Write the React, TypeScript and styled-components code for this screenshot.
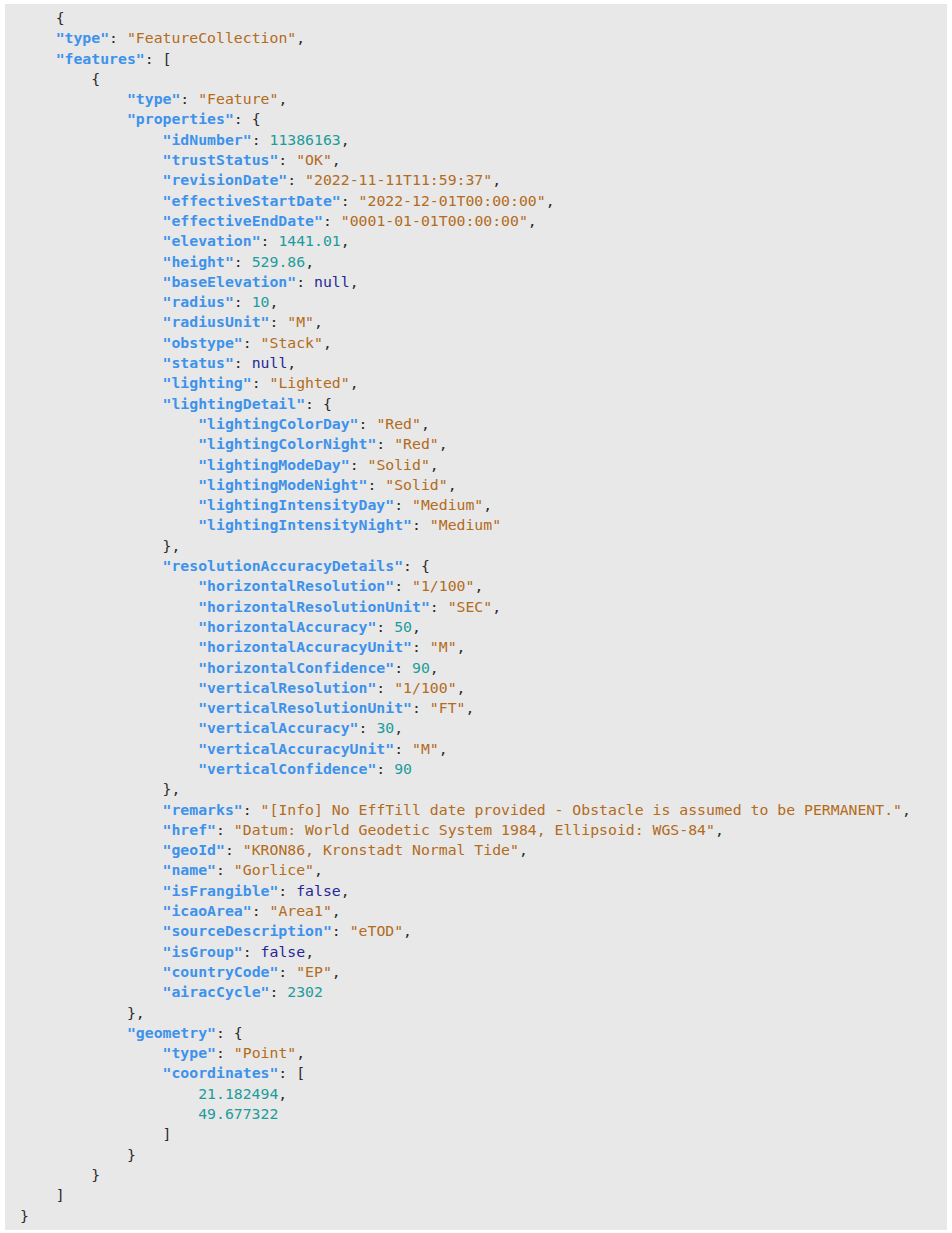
import React from "react";
import styled, { createGlobalStyle } from "styled-components";

const GlobalStyle = createGlobalStyle`
  body {
    margin: 0;
    background: #ffffff;
  }
`;

const feature = {
  type: "FeatureCollection",
  features: [
    {
      type: "Feature",
      properties: {
        idNumber: 11386163,
        trustStatus: "OK",
        revisionDate: "2022-11-11T11:59:37",
        effectiveStartDate: "2022-12-01T00:00:00",
        effectiveEndDate: "0001-01-01T00:00:00",
        elevation: 1441.01,
        height: 529.86,
        baseElevation: null,
        radius: 10,
        radiusUnit: "M",
        obstype: "Stack",
        status: null,
        lighting: "Lighted",
        lightingDetail: {
          lightingColorDay: "Red",
          lightingColorNight: "Red",
          lightingModeDay: "Solid",
          lightingModeNight: "Solid",
          lightingIntensityDay: "Medium",
          lightingIntensityNight: "Medium",
        },
        resolutionAccuracyDetails: {
          horizontalResolution: "1/100",
          horizontalResolutionUnit: "SEC",
          horizontalAccuracy: 50,
          horizontalAccuracyUnit: "M",
          horizontalConfidence: 90,
          verticalResolution: "1/100",
          verticalResolutionUnit: "FT",
          verticalAccuracy: 30,
          verticalAccuracyUnit: "M",
          verticalConfidence: 90,
        },
        remarks:
          "[Info] No EffTill date provided - Obstacle is assumed to be PERMANENT.",
        href: "Datum: World Geodetic System 1984, Ellipsoid: WGS-84",
        geoId: "KRON86, Kronstadt Normal Tide",
        name: "Gorlice",
        isFrangible: false,
        icaoArea: "Area1",
        sourceDescription: "eTOD",
        isGroup: false,
        countryCode: "EP",
        airacCycle: 2302,
      },
      geometry: {
        type: "Point",
        coordinates: [21.182494, 49.677322],
      },
    },
  ],
};

type Kind = "key" | "str" | "num" | "lit" | "punc";

interface Token {
  kind: Kind;
  text: string;
}

const tokenPattern =
  /("(?:[^"\\]|\\.)*")(\s*:)?|(-?\d+(?:\.\d+)?(?:[eE][+-]?\d+)?)|(true|false|null)|(\s+)|([^\s"]+?)/g;

const tokenize = (line: string): Token[] => {
  const tokens: Token[] = [];
  let m: RegExpExecArray | null;
  tokenPattern.lastIndex = 0;
  while ((m = tokenPattern.exec(line)) !== null) {
    if (m[1] && m[2]) {
      tokens.push({ kind: "key", text: m[1] });
      tokens.push({ kind: "punc", text: m[2] });
    } else if (m[1]) {
      tokens.push({ kind: "str", text: m[1] });
    } else if (m[3]) {
      tokens.push({ kind: "num", text: m[3] });
    } else if (m[4]) {
      tokens.push({ kind: "lit", text: m[4] });
    } else {
      tokens.push({ kind: "punc", text: m[0] });
    }
  }
  return tokens;
};

const CodeBlock = styled.pre`
  margin: 4px 5px 3px 5px;
  padding: 4px 15px 4px 15px;
  background-color: #e8e8e8;
  font-family: "DejaVu Sans Mono", "Liberation Mono", monospace;
  font-size: 14.8px;
  line-height: 20.3px;
  color: #2b2b2b;
  white-space: pre;
  overflow: hidden;
`;

const Line = styled.div`
  height: 20.3px;
`;

const Piece = styled.span<{ $kind: Kind }>`
  color: ${({ $kind }) =>
    $kind === "key"
      ? "#3d92ec"
      : $kind === "str"
      ? "#b36b1c"
      : $kind === "num"
      ? "#1c9c9c"
      : $kind === "lit"
      ? "#262696"
      : "#2b2b2b"};
  font-weight: ${({ $kind }) => ($kind === "key" ? 700 : 400)};
`;

const App = () => {
  const lines = JSON.stringify(feature, null, 4).split("\n");
  lines[0] = "    " + lines[0];

  return (
    <>
      <GlobalStyle />
      <CodeBlock>
        {lines.map((line, i) => (
          <Line key={i}>
            {tokenize(line).map((t, j) => (
              <Piece key={j} $kind={t.kind}>
                {t.text}
              </Piece>
            ))}
          </Line>
        ))}
      </CodeBlock>
    </>
  );
};

export default App;
